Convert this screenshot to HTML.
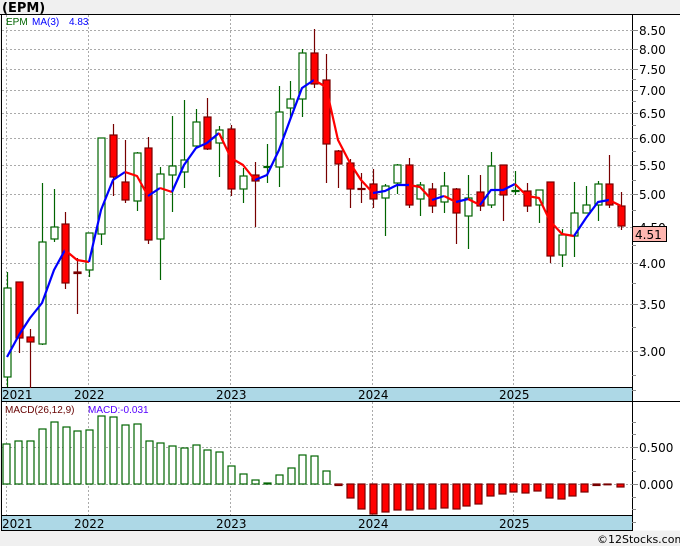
<!DOCTYPE html>
<html><head><meta charset="utf-8"><style>
body{margin:0;width:680px;height:546px;background:#f0f0f0;overflow:hidden;font-family:"Liberation Sans",sans-serif}
svg{position:absolute;left:0;top:0}
</style></head><body>
<svg width="680" height="546" viewBox="0 0 680 546" font-family="Liberation Sans, sans-serif">
<rect x="0" y="0" width="680" height="546" fill="#f0f0f0"/>
<text x="2" y="12" font-size="13" font-weight="bold" fill="#000" font-family="DejaVu Sans, sans-serif">(EPM)</text>
<rect x="1.5" y="14.5" width="630.5" height="373" fill="#fff"/>
<rect x="632" y="14.5" width="48" height="516" fill="#fff"/>
<rect x="1.5" y="401.5" width="630.5" height="114" fill="#fff"/>
<rect x="1.5" y="387.5" width="630.5" height="14" fill="#add8e6"/>
<rect x="1.5" y="515.5" width="630.5" height="15" fill="#add8e6"/>
<g stroke="#aaa" stroke-width="1" stroke-dasharray="2,2">
<path d="M2 30.5H632M2 49.5H632M2 69.5H632M2 90.5H632M2 113.5H632M2 138.5H632M2 165.5H632M2 194.5H632M2 227.5H632M2 263.5H632M2 304.5H632M2 351.5H632"/>
<path d="M2 447.5H632M2 484.5H632"/>
<path d="M6.5 15V388M88.5 15V388M230.5 15V388M372.5 15V388M513.5 15V388"/>
<path d="M6.5 402V516M88.5 402V516M230.5 402V516M372.5 402V516M513.5 402V516"/>
</g>
<g stroke="#000" stroke-width="1" fill="none">
<path d="M0 14.5H680"/>
<path d="M1.5 14V531"/>
<path d="M632.5 14V531"/>
<path d="M1 387.5H632M1 401.5H680M1 515.5H632M1 530.5H632"/>
</g>
<g stroke="#888" stroke-width="1">
<path d="M632 30.5h6M632 49.5h6M632 69.5h6M632 90.5h6M632 113.5h6M632 138.5h6M632 165.5h6M632 194.5h6M632 227.5h6M632 263.5h6M632 304.5h6M632 351.5h6"/>
<path d="M632 79.5h4M632 101.5h4M632 125.5h4M632 151.5h4M632 180.5h4M632 210.5h4M632 245.5h4M632 283.5h4M632 327.5h4M632 375.5h4"/>
<path d="M632 447.5h6M632 484.5h6M632 422.5h4M632 434.5h4M632 459.5h4M632 471.5h4M632 497.5h4M632 509.5h4M632 522.5h4M632 390.5h4"/>
</g>
<g font-size="12" fill="#000" font-family="DejaVu Sans, sans-serif">
<text x="639" y="35">8.50</text><text x="639" y="54">8.00</text><text x="639" y="74">7.50</text><text x="639" y="95">7.00</text><text x="639" y="118">6.50</text><text x="639" y="143">6.00</text><text x="639" y="170">5.50</text><text x="639" y="199">5.00</text><text x="639" y="232">4.50</text><text x="639" y="268">4.00</text><text x="639" y="309">3.50</text><text x="639" y="356">3.00</text>
<text x="639" y="452">0.500</text><text x="639" y="489">0.000</text>
</g>
<rect x="632.5" y="226.5" width="34" height="15" fill="#ffb6b0" stroke="#000"/>
<text x="635" y="239" font-size="12" fill="#000" font-family="DejaVu Sans, sans-serif">4.51</text>
<g font-size="12" fill="#000" font-family="DejaVu Sans, sans-serif">
<text x="2" y="399">2021</text><text x="74" y="399">2022</text><text x="216" y="399">2023</text><text x="358" y="399">2024</text><text x="499" y="399">2025</text>
<text x="2" y="528">2021</text><text x="74" y="528">2022</text><text x="216" y="528">2023</text><text x="358" y="528">2024</text><text x="499" y="528">2025</text>
</g>
<text x="6" y="25" font-size="10" fill="#006400">EPM</text>
<text x="32" y="25" font-size="10" fill="#0000ff">MA(3)</text>
<text x="69" y="25" font-size="10" fill="#0000ff">4.83</text>
<text x="5" y="413" font-size="10" fill="#600">MACD(26,12,9)</text>
<text x="88" y="413" font-size="10" fill="#5500ff">MACD:-0.031</text>
<text x="597" y="543" font-size="11" fill="#000" font-family="DejaVu Sans, sans-serif">©12Stocks.com</text>
<g stroke="#006400" stroke-width="1.2" fill="#fff">
<path d="M7.5 272V387M42.5 183V345M54.5 189V242M89.5 233V277M101.5 138V245M137.5 152V211M160.5 167V280M172.5 116V212M184.5 100V188M196.5 109V148M219.5 126V177M243.5 168V203M267.5 144V183M279.5 86V187M290.5 81V119M302.5 49V117M385.5 184V236M397.5 164V194M420.5 182V216M444.5 172V213M468.5 175V249M491.5 152V208M515.5 171V195M539.5 190V223M562.5 229V267M574.5 182V257M586.5 186V212M598.5 181V221"/>
<rect x="4" y="288" width="7" height="89"/><rect x="39" y="242" width="7" height="102"/><rect x="51" y="227" width="7" height="12"/><rect x="86" y="233" width="7" height="37"/><rect x="98" y="138" width="7" height="96"/><rect x="134" y="153" width="7" height="48"/><rect x="157" y="174" width="7" height="65"/><rect x="169" y="166" width="7" height="9"/><rect x="181" y="160" width="7" height="12"/><rect x="193" y="122" width="7" height="24"/><rect x="216" y="130" width="7" height="13"/><rect x="240" y="176" width="7" height="13"/><rect x="264" y="166.5" width="7" height="1"/><rect x="276" y="112" width="7" height="55"/><rect x="287" y="99" width="7" height="9"/><rect x="299" y="53" width="7" height="46"/><rect x="382" y="186" width="7" height="12"/><rect x="394" y="165" width="7" height="18"/><rect x="417" y="185" width="7" height="14"/><rect x="441" y="186" width="7" height="16"/><rect x="465" y="198" width="7" height="18"/><rect x="488" y="166" width="7" height="39"/><rect x="512" y="190.5" width="7" height="1"/><rect x="536" y="190" width="7" height="15"/><rect x="559" y="235" width="7" height="20"/><rect x="571" y="213" width="7" height="23"/><rect x="583" y="205" width="7" height="8"/><rect x="595" y="184" width="7" height="21"/>
</g>
<g stroke="#700" stroke-width="1.2" fill="#f00">
<path d="M19.5 282V353M30.5 329V388M65.5 212V289M77.5 258V314M113.5 124V196M125.5 140V203M148.5 137V244M207.5 98V150M231.5 125V196M255.5 162V227M314.5 29V88M326.5 54V183M338.5 150V188M350.5 159V208M361.5 173V203M373.5 169V208M409.5 158V208M432.5 183V213M456.5 188V244M480.5 175V211M503.5 165V221M527.5 183V212M550.5 182V263M609.5 155V208M621.5 192V230"/>
<rect x="16" y="282" width="7" height="56"/><rect x="27" y="337" width="7" height="5"/><rect x="62" y="224" width="7" height="59"/><rect x="74" y="272" width="7" height="1.5" fill="#700"/><rect x="110" y="135" width="7" height="42"/><rect x="122" y="182" width="7" height="18"/><rect x="145" y="148" width="7" height="92"/><rect x="204" y="117" width="7" height="32"/><rect x="228" y="129" width="7" height="60"/><rect x="252" y="175" width="7" height="6"/><rect x="311" y="53" width="7" height="31"/><rect x="323" y="80" width="7" height="64"/><rect x="335" y="151" width="7" height="13"/><rect x="347" y="163" width="7" height="26"/><rect x="358" y="188.5" width="7" height="1" fill="#700"/><rect x="370" y="184" width="7" height="15"/><rect x="406" y="165" width="7" height="40"/><rect x="429" y="189" width="7" height="17"/><rect x="453" y="189" width="7" height="24"/><rect x="477" y="192" width="7" height="14"/><rect x="500" y="165" width="7" height="30"/><rect x="524" y="191" width="7" height="15"/><rect x="547" y="182" width="7" height="74"/><rect x="606" y="184" width="7" height="21"/><rect x="618" y="206" width="7" height="20"/>
</g>
<g fill="none" stroke-width="2.2" stroke-linejoin="round">
<polyline stroke="#0000ff" points="7,357 19,335 30,318 42,303 54,270 65,250"/>
<polyline stroke="#ff0000" points="65,250 77,260 89,262"/>
<polyline stroke="#0000ff" points="89,262 101,210 113,180 125,172"/>
<polyline stroke="#ff0000" points="125,172 137,176 148,196"/>
<polyline stroke="#0000ff" points="148,196 160,188"/>
<polyline stroke="#ff0000" points="160,188 172,192"/>
<polyline stroke="#0000ff" points="172,192 184,165 196,148 207,143 219,133"/>
<polyline stroke="#ff0000" points="219,133 231,158 243,165 255,180"/>
<polyline stroke="#0000ff" points="255,180 267,175 279,150 290,120 302,88 314,80"/>
<polyline stroke="#ff0000" points="314,80 326,87 338,140 350,163 361,180 373,193"/>
<polyline stroke="#0000ff" points="373,193 385,191 397,185 409,185"/>
<polyline stroke="#ff0000" points="409,185 420,187 432,200"/>
<polyline stroke="#0000ff" points="432,200 444,196"/>
<polyline stroke="#ff0000" points="444,196 456,202"/>
<polyline stroke="#0000ff" points="456,202 468,199"/>
<polyline stroke="#ff0000" points="468,199 480,205"/>
<polyline stroke="#0000ff" points="480,205 491,190 503,190 515,184"/>
<polyline stroke="#ff0000" points="515,184 527,196 539,198 550,221 562,234 574,236"/>
<polyline stroke="#0000ff" points="574,236 586,218 598,202 609,200"/>
<polyline stroke="#ff0000" points="609,200 621,206"/>
</g>
<g stroke="#006400" stroke-width="1.2" fill="#fff">
<rect x="3" y="444" width="7" height="40"/><rect x="15" y="441" width="7" height="43"/><rect x="27" y="441" width="7" height="43"/><rect x="39" y="429" width="7" height="55"/><rect x="51" y="422" width="7" height="62"/><rect x="63" y="427" width="7" height="57"/><rect x="74" y="431" width="7" height="53"/><rect x="86" y="430" width="7" height="54"/><rect x="98" y="416" width="7" height="68"/><rect x="110" y="417" width="7" height="67"/><rect x="122" y="425" width="7" height="59"/><rect x="134" y="424" width="7" height="60"/><rect x="146" y="441" width="7" height="43"/><rect x="157" y="443" width="7" height="41"/><rect x="169" y="446" width="7" height="38"/><rect x="181" y="448" width="7" height="36"/><rect x="193" y="445" width="7" height="39"/><rect x="204" y="450" width="7" height="34"/><rect x="216" y="452" width="7" height="32"/><rect x="228" y="466" width="7" height="18"/><rect x="240" y="474" width="7" height="10"/><rect x="252" y="480" width="7" height="4"/><rect x="264" y="483" width="7" height="1" fill="#006400"/><rect x="276" y="475" width="7" height="9"/><rect x="288" y="468" width="7" height="16"/><rect x="299" y="455" width="7" height="29"/><rect x="311" y="456" width="7" height="28"/><rect x="323" y="471" width="7" height="13"/>
</g>
<g stroke="#700" stroke-width="1.2" fill="#f00">
<rect x="335" y="484" width="7" height="1.5"/><rect x="347" y="484" width="7" height="14"/><rect x="358" y="484" width="7" height="25"/><rect x="370" y="484" width="7" height="30"/><rect x="382" y="484" width="7" height="28"/><rect x="394" y="484" width="7" height="26"/><rect x="406" y="484" width="7" height="26"/><rect x="417" y="484" width="7" height="25"/><rect x="429" y="484" width="7" height="25"/><rect x="441" y="484" width="7" height="24"/><rect x="453" y="484" width="7" height="25"/><rect x="463" y="484" width="7" height="22"/><rect x="475" y="484" width="7" height="20"/><rect x="487" y="484" width="7" height="12"/><rect x="499" y="484" width="7" height="10"/><rect x="510" y="484" width="7" height="8"/><rect x="522" y="484" width="7" height="9"/><rect x="534" y="484" width="7" height="7"/><rect x="546" y="484" width="7" height="14"/><rect x="558" y="484" width="7" height="15"/><rect x="569" y="484" width="7" height="12"/><rect x="581" y="484" width="7" height="8"/><rect x="593" y="484" width="7" height="1.5" fill="#700"/><rect x="604" y="484" width="7" height="0.8" fill="#700"/><rect x="617" y="484" width="7" height="3"/>
</g>
</svg>
</body></html>
